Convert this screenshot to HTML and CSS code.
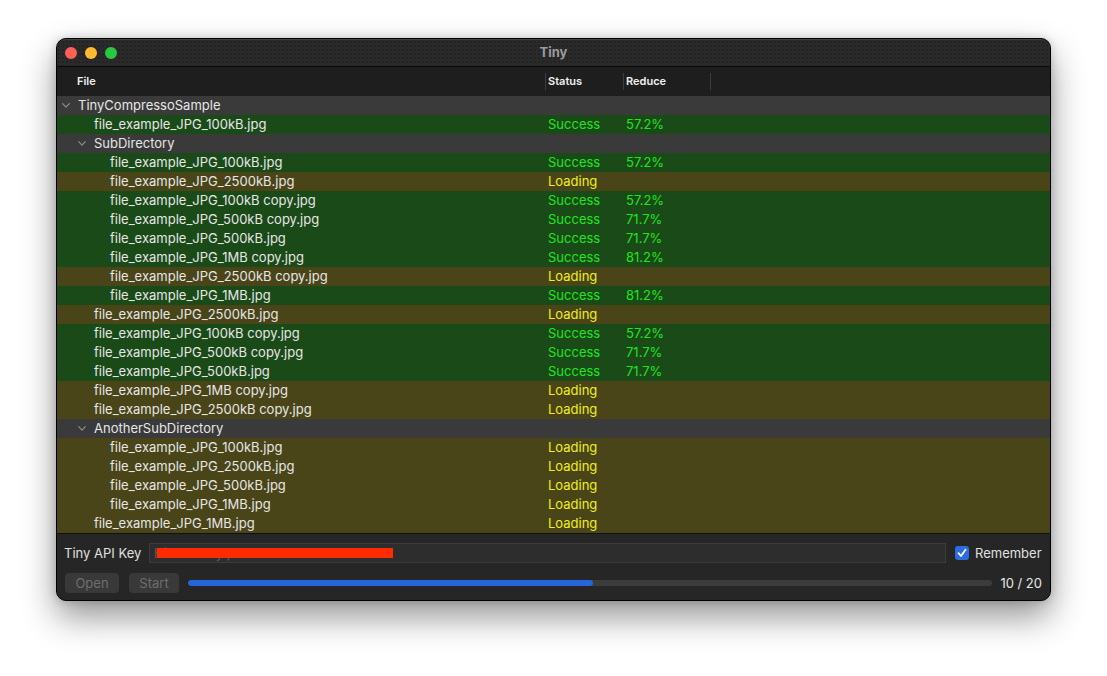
FILE: index.html
```html
<!DOCTYPE html>
<html>
<head>
<meta charset="utf-8">
<title>Tiny</title>
<link rel="stylesheet" href="styles.css">
</head>
<body>
<div class="stage">
  <div class="window">
    <div class="titlebar">
      <div class="lights">
        <span class="light red"></span>
        <span class="light yellow"></span>
        <span class="light green"></span>
      </div>
      <div class="title">Tiny</div>
    </div>
    <div class="header">
      <div class="col c-file">File</div>
      <div class="col c-status sep">Status</div>
      <div class="col c-reduce sep">Reduce</div>
      <div class="col c-rest sep"></div>
    </div>
    <div class="rows">
      <div class="row group"><div class="c-file l0"><svg class="chev" viewBox="0 0 8 5"><polyline points="0.7,0.7 4,4.2 7.3,0.7"/></svg>TinyCompressoSample</div></div>
      <div class="row ok"><div class="c-file l1">file_example_JPG_100kB.jpg</div><div class="c-status s-ok">Success</div><div class="c-reduce">57.2%</div></div>
      <div class="row group"><div class="c-file l1g"><svg class="chev" viewBox="0 0 8 5"><polyline points="0.7,0.7 4,4.2 7.3,0.7"/></svg>SubDirectory</div></div>
      <div class="row ok"><div class="c-file l2">file_example_JPG_100kB.jpg</div><div class="c-status s-ok">Success</div><div class="c-reduce">57.2%</div></div>
      <div class="row load"><div class="c-file l2">file_example_JPG_2500kB.jpg</div><div class="c-status s-load">Loading</div><div class="c-reduce"></div></div>
      <div class="row ok"><div class="c-file l2">file_example_JPG_100kB copy.jpg</div><div class="c-status s-ok">Success</div><div class="c-reduce">57.2%</div></div>
      <div class="row ok"><div class="c-file l2">file_example_JPG_500kB copy.jpg</div><div class="c-status s-ok">Success</div><div class="c-reduce">71.7%</div></div>
      <div class="row ok"><div class="c-file l2">file_example_JPG_500kB.jpg</div><div class="c-status s-ok">Success</div><div class="c-reduce">71.7%</div></div>
      <div class="row ok"><div class="c-file l2">file_example_JPG_1MB copy.jpg</div><div class="c-status s-ok">Success</div><div class="c-reduce">81.2%</div></div>
      <div class="row load"><div class="c-file l2">file_example_JPG_2500kB copy.jpg</div><div class="c-status s-load">Loading</div><div class="c-reduce"></div></div>
      <div class="row ok"><div class="c-file l2">file_example_JPG_1MB.jpg</div><div class="c-status s-ok">Success</div><div class="c-reduce">81.2%</div></div>
      <div class="row load"><div class="c-file l1">file_example_JPG_2500kB.jpg</div><div class="c-status s-load">Loading</div><div class="c-reduce"></div></div>
      <div class="row ok"><div class="c-file l1">file_example_JPG_100kB copy.jpg</div><div class="c-status s-ok">Success</div><div class="c-reduce">57.2%</div></div>
      <div class="row ok"><div class="c-file l1">file_example_JPG_500kB copy.jpg</div><div class="c-status s-ok">Success</div><div class="c-reduce">71.7%</div></div>
      <div class="row ok"><div class="c-file l1">file_example_JPG_500kB.jpg</div><div class="c-status s-ok">Success</div><div class="c-reduce">71.7%</div></div>
      <div class="row load"><div class="c-file l1">file_example_JPG_1MB copy.jpg</div><div class="c-status s-load">Loading</div><div class="c-reduce"></div></div>
      <div class="row load"><div class="c-file l1">file_example_JPG_2500kB copy.jpg</div><div class="c-status s-load">Loading</div><div class="c-reduce"></div></div>
      <div class="row group"><div class="c-file l1g"><svg class="chev" viewBox="0 0 8 5"><polyline points="0.7,0.7 4,4.2 7.3,0.7"/></svg>AnotherSubDirectory</div></div>
      <div class="row load"><div class="c-file l2">file_example_JPG_100kB.jpg</div><div class="c-status s-load">Loading</div><div class="c-reduce"></div></div>
      <div class="row load"><div class="c-file l2">file_example_JPG_2500kB.jpg</div><div class="c-status s-load">Loading</div><div class="c-reduce"></div></div>
      <div class="row load"><div class="c-file l2">file_example_JPG_500kB.jpg</div><div class="c-status s-load">Loading</div><div class="c-reduce"></div></div>
      <div class="row load"><div class="c-file l2">file_example_JPG_1MB.jpg</div><div class="c-status s-load">Loading</div><div class="c-reduce"></div></div>
      <div class="row load"><div class="c-file l1">file_example_JPG_1MB.jpg</div><div class="c-status s-load">Loading</div><div class="c-reduce"></div></div>
    </div>
    <div class="footer">
      <div class="keyline">
        <span class="label">Tiny API Key</span>
        <div class="field"><span class="ph">Hidden key placeholder text here</span><span class="redact"></span></div>
        <label class="check"><span class="box"><svg viewBox="0 0 14 14"><polyline points="3.5,7.2 6,10 10.5,3.8"/></svg></span>Remember</label>
      </div>
      <div class="actions">
        <span class="btn btn-open">Open</span>
        <span class="btn btn-start">Start</span>
        <div class="progress"><div class="fill" style="width:50.4%"></div></div>
        <span class="count">10 / 20</span>
      </div>
    </div>
  </div>
</div>
</body>
</html>
```

FILE: styles.css
```css
* { box-sizing: border-box; }
html, body { margin: 0; padding: 0; background: #ffffff; }
body { font-family: Inter, "Noto Sans", "Liberation Sans", sans-serif; font-size: 13px; color: #e6e6e6; }

.stage { padding: 38px 56px 80px 56px; }

.window {
  width: 995px;
  height: 563px;
  border-radius: 10px;
  background: #282828;
  border: 1px solid #000;
  box-shadow: 0 16px 34px rgba(0,0,0,0.42), 0 0 10px rgba(0,0,0,0.18);
  overflow: hidden;
  display: flex;
  flex-direction: column;
}

.titlebar {
  height: 28px;
  flex: none;
  background-color: #2a2a2a;
  background-image: radial-gradient(rgba(0,0,0,0.35) 0.6px, transparent 0.8px);
  background-size: 4px 4px;
  border-bottom: 1px solid #0a0a0a;
  display: flex;
  align-items: center;
  position: relative;
  border-top: 1px solid rgba(255,255,255,0.12);
  border-radius: 9px 9px 0 0;
}
.lights { display: flex; gap: 8px; padding-left: 8px; }
.light { width: 12px; height: 12px; border-radius: 50%; display: block; }
.light.red { background: #fe5f57; }
.light.yellow { background: #febc2e; }
.light.green { background: #28c840; }
.title {
  position: absolute; left: 0; right: 0; top: 0; bottom: 2px;
  display: flex; align-items: center; justify-content: center;
  font-weight: 700; font-size: 13px; color: #9b9b9b;
  pointer-events: none;
}

.header {
  height: 29px;
  flex: none;
  background: #1e1e1e;
  display: flex;
  align-items: center;
  font-size: 11px;
  font-weight: 600;
  color: #f0f0f0;
}
.header .col { height: 100%; display: flex; align-items: center; padding-bottom: 1px; }
.header .sep { position: relative; }
.header .sep::before {
  content: ""; position: absolute; left: 0; top: 6px; bottom: 6px;
  width: 1px; background: #3d3d3d;
}
.header .c-file { padding-left: 20px; }
.header .c-status, .header .c-reduce { padding-left: 3px; }

.c-file { width: 488px; flex: none; }
.c-status { width: 78px; flex: none; }
.c-reduce { width: 87px; flex: none; }
.c-rest { flex: 1; }

.rows { flex: none; }
.row {
  height: 19px;
  display: flex;
  align-items: center;
  line-height: 19px;
  white-space: nowrap;
}
.row.group { background: #3a3a3a; }
.row.ok { background: #1b4a19; }
.row.load { background: #4a4519; }
.row .c-status { padding-left: 3px; }
.row .c-reduce { padding-left: 3px; color: #1ee61e; }
.s-ok { color: #1ee61e; }
.s-load { color: #f0ef16; }

.l0 { padding-left: 5px; display: flex; align-items: center; }
.l1 { padding-left: 37px; }
.l1g { padding-left: 21px; display: flex; align-items: center; }
.l2 { padding-left: 53px; }

.chev {
  width: 8px; height: 5px; margin-right: 8px; flex: none;
  fill: none; stroke: #8c8c8c; stroke-width: 1.2;
  stroke-linecap: round; stroke-linejoin: round;
}

.footer {
  flex: 1;
  background: #262626;
  border-top: 1px solid #111;
  padding: 8px 8px 0 7px;
  display: flex;
  flex-direction: column;
  gap: 10px;
}
.keyline { display: flex; align-items: center; height: 21px; }
.label { color: #e0e0e0; font-size: 13px; width: 85px; flex: none; }
.field {
  width: 797px; height: 20px; flex: none;
  background: #2d2d2d;
  border: 1px solid #3c3c3c;
  position: relative;
  display: flex; align-items: center;
  padding-left: 4px;
  overflow: hidden;
  white-space: nowrap;
}
.ph { color: #5e5e5e; font-size: 13px; }
.redact {
  position: absolute; left: 7px; top: 4px;
  width: 236px; height: 10px;
  background: #fe2a00;
}
.check { display: flex; align-items: center; margin-left: 9px; color: #e0e0e0; font-size: 13px; white-space: nowrap; }
.box {
  width: 14px; height: 14px; border-radius: 3px;
  background: #2b6ce0;
  margin-right: 6px;
  display: flex;
}
.box svg { width: 14px; height: 14px; fill: none; stroke: #fff; stroke-width: 1.8; stroke-linecap: round; stroke-linejoin: round; }

.actions { display: flex; align-items: center; height: 20px; }
.btn {
  height: 20px;
  background: #393939;
  border-radius: 4px;
  color: #6e6e6e;
  font-size: 13px;
  display: flex; align-items: center; justify-content: center;
  flex: none;
}
.btn-open { width: 54px; margin-left: 1px; }
.btn-start { width: 50px; margin-left: 10px; }
.progress {
  margin-left: 9px;
  flex: 1;
  height: 6px;
  background: #3c3c3c;
  border-radius: 3px;
  overflow: hidden;
}
.fill { height: 100%; background: #2566dc; border-radius: 3px; }
.count { margin-left: 8px; margin-right: 0; color: #e6e6e6; font-size: 13px; white-space: nowrap; flex: none; }
```
